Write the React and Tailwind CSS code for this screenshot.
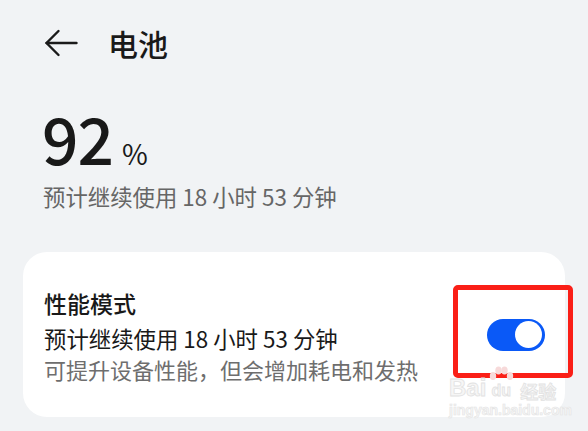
import React from "react";

function BackArrow() {
  return (
    <svg width="34" height="28" viewBox="0 0 34 28" fill="none">
      <path d="M2.5 14H32.5" stroke="#1a1a1a" strokeWidth="2.4" strokeLinecap="round" />
      <path d="M14.5 2L2.5 14L14.5 26" stroke="#1a1a1a" strokeWidth="2.4" strokeLinecap="round" strokeLinejoin="round" />
    </svg>
  );
}

function Toggle() {
  return (
    <div className="w-[58px] h-[32px] rounded-full bg-[#0a59f7] flex items-center justify-end pr-[3px]">
      <div className="w-[27px] h-[27px] rounded-full bg-white" />
    </div>
  );
}

function Watermark() {
  return (
    <div className="absolute left-[449px] top-[366px] flex flex-col pointer-events-none select-none">
      <div className="flex items-end leading-none">
        <span className="text-[24px] font-bold text-[#f6f6f6] [-webkit-text-stroke:0.8px_#e2e2e2] [font-family:'Liberation_Sans',sans-serif]">Bai</span>
        <span className="relative w-[30px] h-[34px] flex items-end justify-center">
          <svg className="absolute top-0 left-[2px]" width="26" height="16" viewBox="0 0 26 16">
            <ellipse cx="5" cy="10" rx="3.2" ry="4" fill="#f7dada" />
            <ellipse cx="10.5" cy="4.5" rx="3.2" ry="4" fill="#f7dada" />
            <ellipse cx="16.5" cy="4.5" rx="3.2" ry="4" fill="#f7dada" />
            <ellipse cx="22" cy="10" rx="3.2" ry="4" fill="#f7dada" />
          </svg>
          <span className="text-[16px] font-bold text-[#f6f6f6] [-webkit-text-stroke:0.8px_#e2e2e2] [font-family:'Liberation_Sans',sans-serif] mb-[1px]">du</span>
        </span>
        <span className="ml-[4px] text-[18px] font-bold text-[#f6f6f6] [-webkit-text-stroke:0.8px_#e2e2e2] [font-family:'Noto_Sans_CJK_SC',sans-serif]">经验</span>
      </div>
      <span className="mt-[3px] text-[14px] leading-[14px] font-bold text-[#f6f6f6] [-webkit-text-stroke:0.6px_#e4e4e4] [font-family:'Liberation_Sans',sans-serif]">jingyan.baidu.com</span>
    </div>
  );
}

export default function App() {
  return (
    <div className="relative w-[588px] h-[431px] overflow-hidden bg-[#f1f3f5] [font-family:'Noto_Sans_CJK_SC',sans-serif] text-[#191919]">
      {/* Header */}
      <div className="flex items-center h-[56px] mt-[15px] pl-[44px]">
        <BackArrow />
        <span className="ml-[30px] text-[30px] leading-[40px] font-medium">电池</span>
      </div>

      {/* Battery level */}
      <div className="pl-[42px] mt-[30px] flex items-baseline h-[72px]">
        <span className="text-[64px] leading-[72px] font-medium tracking-[-1px]">92</span>
        <span className="ml-[9px] text-[28px] font-normal">%</span>
      </div>
      <div className="pl-[43px] mt-[8px] text-[22.4px] leading-[30px] text-[#666666]">
        预计继续使用 18 小时 53 分钟
      </div>

      {/* Card */}
      <div className="mx-[23px] mt-[41px] h-[165px] rounded-[24px] bg-white flex items-center justify-between pl-[21px] pr-[20px]">
        <div className="flex flex-col">
          <span className="text-[23px] leading-[32px] font-medium">性能模式</span>
          <span className="mt-[2px] text-[22.4px] leading-[34px]">预计继续使用 18 小时 53 分钟</span>
          <span className="text-[22px] leading-[28px] text-[#6e6e6e]">可提升设备性能，但会增加耗电和发热</span>
        </div>
        <Toggle />
      </div>

      {/* Annotation box */}
      <div className="absolute left-[453px] top-[285px] w-[120px] h-[93px] border-[5px] border-[#fa1f17] rounded-[5px]" />
      <Watermark />
    </div>
  );
}
